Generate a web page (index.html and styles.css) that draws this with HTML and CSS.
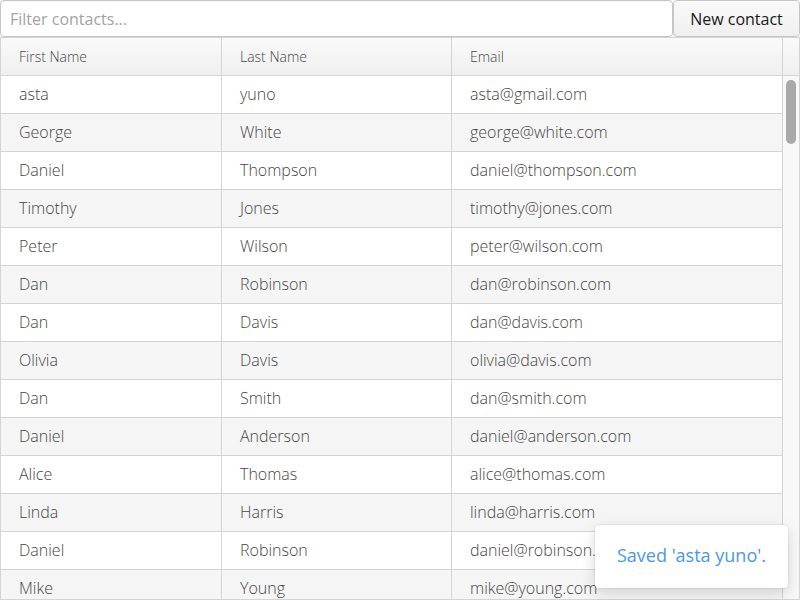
FILE: index.html
```html
<!DOCTYPE html>
<html>
<head>
<meta charset="utf-8">
<link rel="stylesheet" href="styles.css">
</head>
<body>
<div class="app">
  <div class="toolbar">
    <input class="filter" type="text" placeholder="Filter contacts...">
    <button class="btn">New contact</button>
  </div>
  <div class="grid">
    <div class="head">
      <div class="cell c1">First Name</div>
      <div class="cell c2">Last Name</div>
      <div class="cell c3">Email</div>
      <div class="cell sb"></div>
    </div>
    <div class="body">
      <div class="rows">
        <div class="row"><div class="cell c1">asta</div><div class="cell c2">yuno</div><div class="cell c3">asta@gmail.com</div></div>
        <div class="row"><div class="cell c1">George</div><div class="cell c2">White</div><div class="cell c3">george@white.com</div></div>
        <div class="row"><div class="cell c1">Daniel</div><div class="cell c2">Thompson</div><div class="cell c3">daniel@thompson.com</div></div>
        <div class="row"><div class="cell c1">Timothy</div><div class="cell c2">Jones</div><div class="cell c3">timothy@jones.com</div></div>
        <div class="row"><div class="cell c1">Peter</div><div class="cell c2">Wilson</div><div class="cell c3">peter@wilson.com</div></div>
        <div class="row"><div class="cell c1">Dan</div><div class="cell c2">Robinson</div><div class="cell c3">dan@robinson.com</div></div>
        <div class="row"><div class="cell c1">Dan</div><div class="cell c2">Davis</div><div class="cell c3">dan@davis.com</div></div>
        <div class="row"><div class="cell c1">Olivia</div><div class="cell c2">Davis</div><div class="cell c3">olivia@davis.com</div></div>
        <div class="row"><div class="cell c1">Dan</div><div class="cell c2">Smith</div><div class="cell c3">dan@smith.com</div></div>
        <div class="row"><div class="cell c1">Daniel</div><div class="cell c2">Anderson</div><div class="cell c3">daniel@anderson.com</div></div>
        <div class="row"><div class="cell c1">Alice</div><div class="cell c2">Thomas</div><div class="cell c3">alice@thomas.com</div></div>
        <div class="row"><div class="cell c1">Linda</div><div class="cell c2">Harris</div><div class="cell c3">linda@harris.com</div></div>
        <div class="row"><div class="cell c1">Daniel</div><div class="cell c2">Robinson</div><div class="cell c3">daniel@robinson.com</div></div>
        <div class="row"><div class="cell c1">Mike</div><div class="cell c2">Young</div><div class="cell c3">mike@young.com</div></div>
      </div>
      <div class="track"><div class="thumb"></div></div>
    </div>
  </div>
  <div class="toast">Saved 'asta yuno'.</div>
</div>
</body>
</html>
```

FILE: styles.css
```css
* { box-sizing: border-box; }
html, body { margin: 0; padding: 0; }
body {
  width: 800px;
  height: 600px;
  overflow: hidden;
  font-family: "Open Sans", "DejaVu Sans", sans-serif;
  font-weight: 300;
  color: #464646;
  background: #fff;
}
.app {
  position: relative;
  display: flex;
  flex-direction: column;
  height: 600px;
}
.toolbar {
  display: flex;
  height: 37px;
}
.filter {
  flex: 1;
  height: 37px;
  margin: 0;
  border: 1px solid #c5c5c5;
  border-radius: 4px;
  padding: 0 9px;
  font-family: "Open Sans", sans-serif;
  font-weight: 400;
  font-size: 16px;
  color: #474747;
  box-shadow: inset 0 1px 0 #f7f7f7, 0 1px 0 rgba(255,255,255,0.1);
  outline: none;
}
.filter::placeholder { color: #a3a3a3; }
.btn {
  width: 127px;
  height: 37px;
  margin: 0;
  border: 1px solid #c5c5c5;
  border-radius: 4px;
  background: linear-gradient(#fafafa, #efefef);
  font-family: "Open Sans", sans-serif;
  font-weight: 400;
  font-size: 16px;
  color: #191919;
  padding: 0 16px;
  box-shadow: inset 0 1px 0 #fff;
}
.grid {
  flex: 1;
  min-height: 0;
  display: flex;
  flex-direction: column;
  border: 1px solid #d4d4d4;
  overflow: hidden;
}
.head {
  display: flex;
  height: 38px;
  flex: none;
  background: linear-gradient(#fafafa, #efefef);
  border-bottom: 1px solid #d4d4d4;
  font-size: 14px;
}
.cell {
  display: flex;
  align-items: center;
  padding-left: 18px;
  border-right: 1px solid #d4d4d4;
  white-space: nowrap;
  overflow: hidden;
}
.c1 { width: 221px; }
.c2 { width: 230px; }
.c3 { width: 331px; }
.sb { width: 16px; border-right: none; padding: 0; }
.body {
  flex: 1;
  min-height: 0;
  display: flex;
}
.rows {
  width: 782px;
  overflow: hidden;
}
.row {
  display: flex;
  height: 38px;
  border-bottom: 1px solid #d4d4d4;
  font-size: 16px;
}
.row .cell { padding-bottom: 2px; }
.row:nth-child(even) { background: #f5f5f5; }
.track {
  width: 16px;
  background: #f8f8f8;
  padding: 4px 3px 0 3px;
}
.thumb {
  width: 10px;
  height: 64px;
  background: #a9a9a9;
  border-radius: 5px;
}
.toast {
  position: absolute;
  left: 595px;
  top: 525px;
  width: 193px;
  height: 63px;
  background: #fff;
  border-radius: 4px;
  box-shadow: 0 0 0 1px rgba(0,0,0,0.05), 0 5px 15px rgba(0,0,0,0.15);
  display: flex;
  align-items: center;
  padding-left: 22px;
  padding-bottom: 4px;
  font-size: 18px;
  font-weight: 400;
  color: #4b98e6;
  white-space: nowrap;
}
```
